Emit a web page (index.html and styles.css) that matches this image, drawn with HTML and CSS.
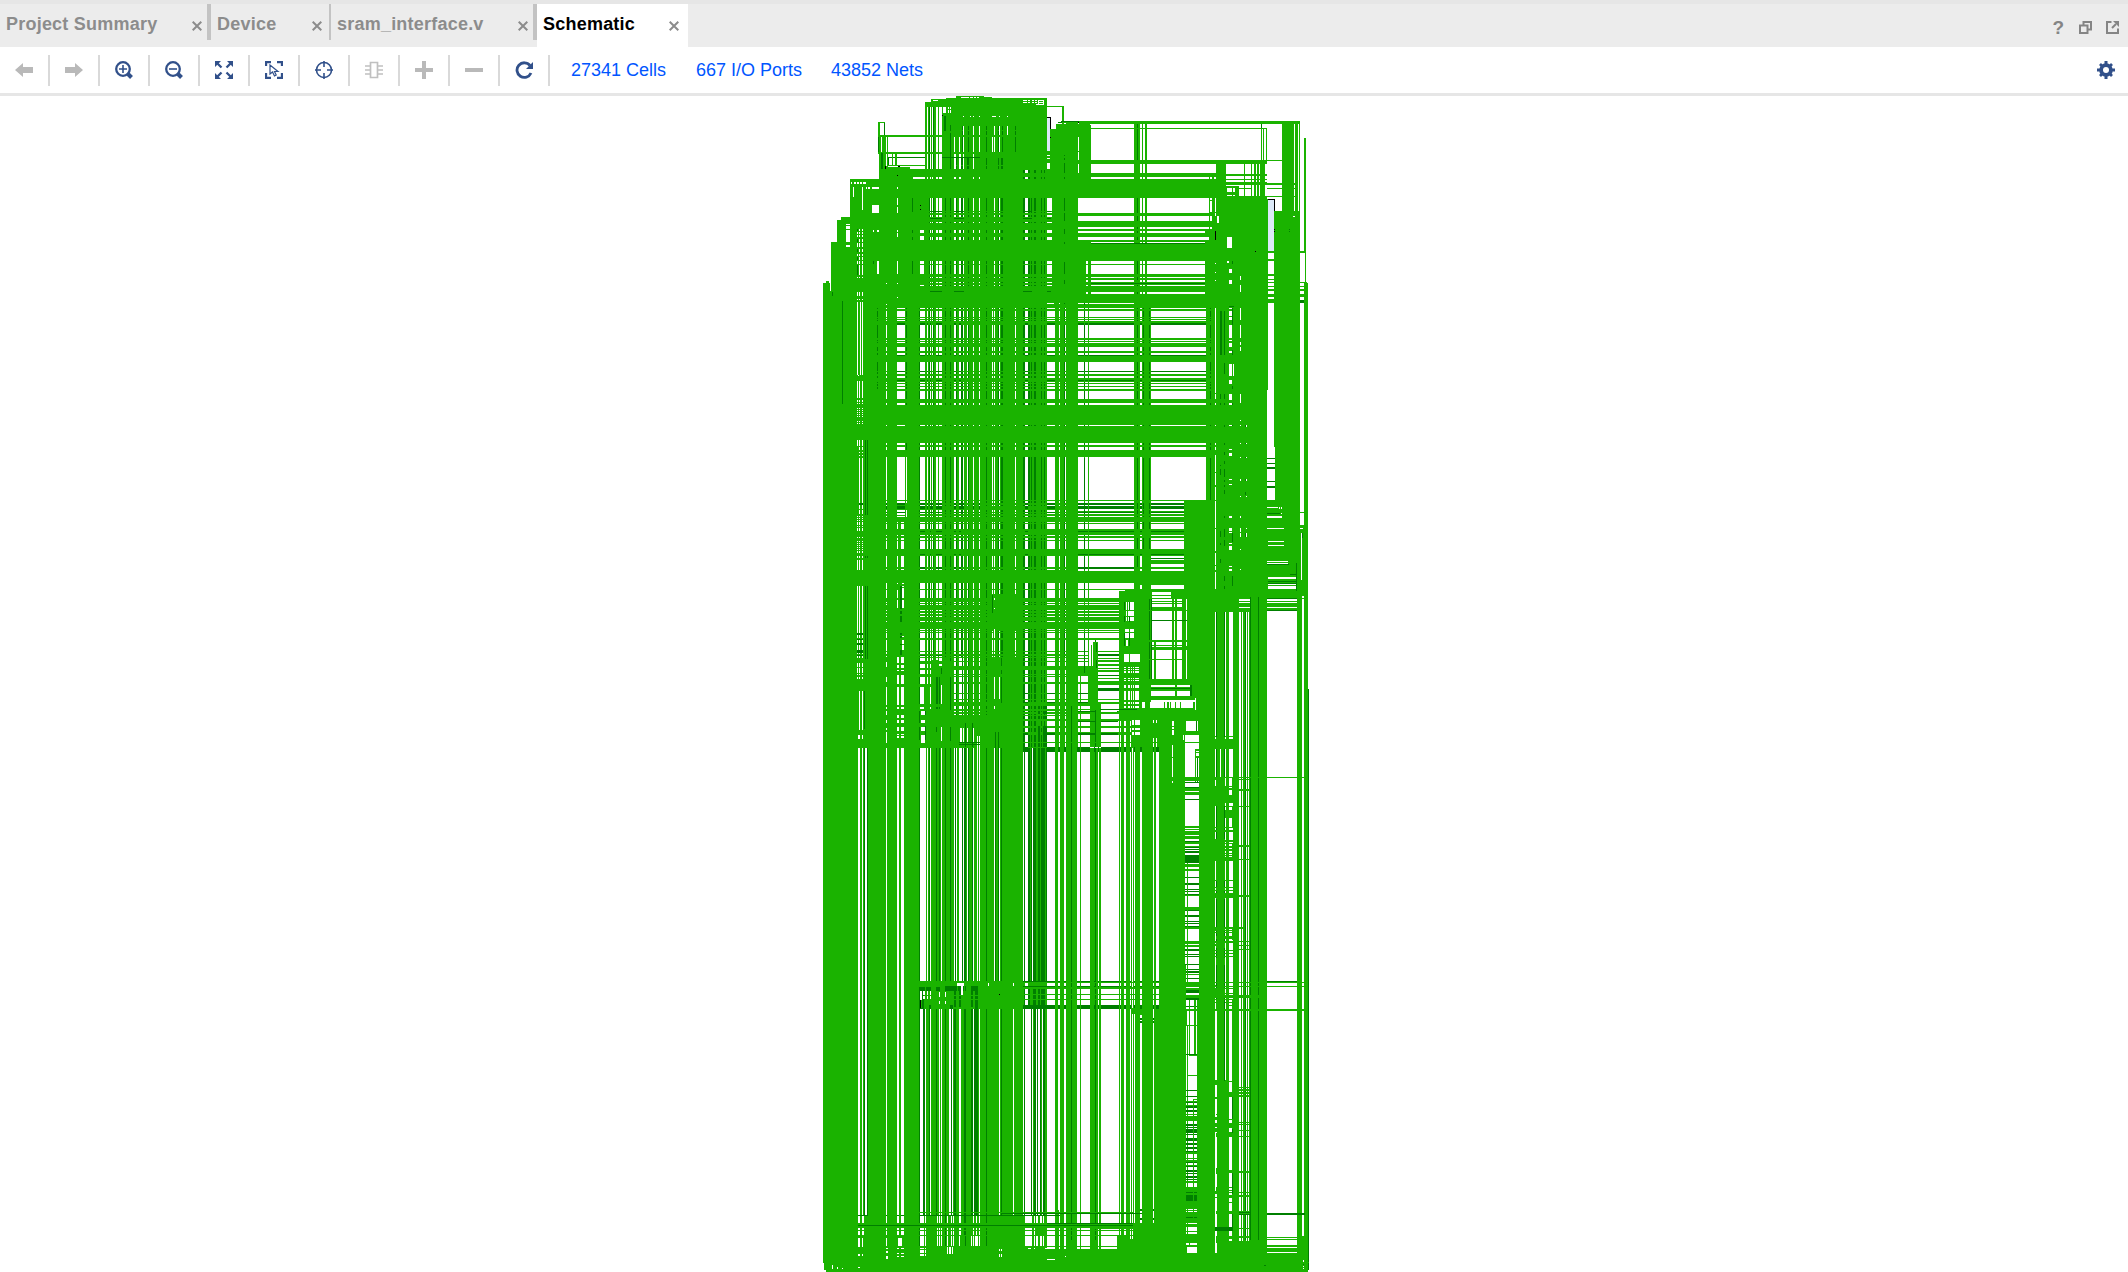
FILE: index.html
```html
<!DOCTYPE html>
<html lang="en">
<head>
<meta charset="utf-8">
<title>Schematic</title>
<link rel="stylesheet" href="styles.css">
</head>
<body>
<div class="window">
  <header class="tabbar">
    <div class="tab t1"><span>Project Summary</span><svg class="x" viewBox="0 0 10 10"><path d="M.7.7 9.3 9.3M9.3.7.7 9.3"/></svg></div>
    <div class="tab t2"><span>Device</span><svg class="x" viewBox="0 0 10 10"><path d="M.7.7 9.3 9.3M9.3.7.7 9.3"/></svg></div>
    <div class="tab t3"><span>sram_interface.v</span><svg class="x" viewBox="0 0 10 10"><path d="M.7.7 9.3 9.3M9.3.7.7 9.3"/></svg></div>
    <div class="tab t4 active"><span>Schematic</span><svg class="x" viewBox="0 0 10 10"><path d="M.7.7 9.3 9.3M9.3.7.7 9.3"/></svg></div>
    <div class="tools">
      <span class="help">?</span>
      <svg width="13" height="13" viewBox="0 0 13 13"><path d="M4.5 4V1h7.5v7.500H9M1 4.500h7.500V12H1z"/></svg>
      <svg width="13" height="13" viewBox="0 0 13 13"><path d="M5.500 1H1v11h11V7.500M6 7l4-4"/><path class="solid" d="M7 0h6v6z"/></svg>
    </div>
  </header>
  <nav class="toolbar">
    <div class="btn"><svg viewBox="0 0 18 18"><path class="off" d="M0 9l8-7v4h10v6H8v4z"/></svg></div>
    <div class="btn"><svg viewBox="0 0 18 18"><path class="off" d="M18 9l-8-7v4H0v6h10v4z"/></svg></div>
    <div class="btn"><svg viewBox="0 0 18 18"><circle class="ln2" cx="8" cy="8" r="6.800"/><path class="ln" d="M4 8h8M8 4v8"/><path class="ln4" d="M13 13l3.500 3.500"/></svg></div>
    <div class="btn"><svg viewBox="0 0 18 18"><circle class="ln2" cx="8" cy="8" r="6.800"/><path class="ln" d="M4 8h8"/><path class="ln4" d="M13 13l3.500 3.500"/></svg></div>
    <div class="btn"><svg viewBox="0 0 18 18"><path class="on" d="M0 0h6L0 6zM12 0h6v6zM0 12l6 6H0zM18 12v6h-6z"/><path class="ln2" d="M2 2l4.500 4.500M16 2l-4.500 4.500M2 16l4.500-4.500M16 16l-4.500-4.500"/></svg></div>
    <div class="btn"><svg viewBox="0 0 18 18"><path class="ln2" d="M1 5V1h5M12 1h5v4M1 12v5h5M12 17h5v-5"/><path class="ln1" d="M5 4v9l2.500-2 2 4 1.700-1-1.700-3.500H13z"/></svg></div>
    <div class="btn"><svg viewBox="0 0 18 18"><circle class="ln" cx="9" cy="9" r="7.500"/><path class="ln" d="M9 0v6M9 12v6M0 9h6M12 9h6"/></svg></div>
    <div class="btn"><svg viewBox="0 0 18 18"><path class="chip" d="M5.500 1.500h7v15h-7zM0 5h5M0 9h5M0 13h5M13 5h5M13 9h5M13 13h5"/></svg></div>
    <div class="btn"><svg viewBox="0 0 18 18"><path class="off" d="M7 0h4v7h7v4h-7v7H7v-7H0V7h7z"/></svg></div>
    <div class="btn"><svg viewBox="0 0 18 18"><path class="off" d="M0 7h18v4H0z"/></svg></div>
    <div class="btn"><svg viewBox="0 0 18 18"><path class="ln3" d="M15 4.500A7.300 7.300 0 1 0 16 12"/><path class="on" d="M18 1v7h-7z"/></svg></div>
    <a class="l1">27341 Cells</a><a class="l2">667 I/O Ports</a><a class="l3">43852 Nets</a>
    <svg class="gear" viewBox="0 0 18 18"><path class="on" d="M7.500 0h3v18h-3zM0 7.500h18v3H0z"/><path class="ln3" d="M3 3l12 12M15 3L3 15"/><circle class="on" cx="9" cy="9" r="6.800"/><circle class="hole" cx="9" cy="9" r="3"/></svg>
  </nav>
  <main class="canvas"><svg id="wires" viewBox="0 96 2128 1176" width="2128" height="1176" shape-rendering="crispEdges"></svg></main>
</div>
<script src="wires.js"></script>
</body>
</html>
```
FILE: styles.css
```css
* { box-sizing: border-box; }
body { margin: 0; background: #fff; font-family: "Liberation Sans", Arial, sans-serif; }
.window { width: 2128px; height: 1272px; display: flex; flex-direction: column; overflow: hidden; }
.tabbar { height: 47px; flex: none; display: flex; background: #ececec; border-top: 4px solid #e6e6e6; }
.tab { height: 36px; display: flex; align-items: center; justify-content: space-between; color: #8c8c8c; font-weight: bold; font-size: 18px; letter-spacing: .22px; border-right: 2px solid #c3c3c3; white-space: nowrap; }
.tab span { line-height: 36px; padding-top: 3px; }
.x { width: 10px; height: 10px; margin-top: 8px; fill: none; stroke: #8c8c8c; stroke-width: 2; }
.t1 { width: 211px; padding: 0 5px 0 6px; border-right-width: 4px; }
.t2 { width: 120px; padding: 0 7px 0 6px; }
.t3 { width: 206px; padding: 0 5px 0 6px; border-right-width: 4px; }
.t4 { width: 151px; padding: 0 9px 7px 6px; height: 43px; background: #fff; border: 0; color: #000; }
.tools { margin-left: auto; padding: 3px 9px 0 0; display: flex; align-items: center; gap: 14px; }
.tools svg { fill: none; stroke: #858585; stroke-width: 2; }
.tools .solid { fill: #858585; stroke: none; }
.help { font: bold 19px "Liberation Sans", Arial, sans-serif; color: #858585; padding-top: 1px; margin-right: 1px; }
.toolbar { height: 49px; flex: none; display: flex; align-items: center; border-bottom: 3px solid #e6e6e6; }
.btn { width: 50px; height: 31px; display: flex; align-items: center; padding-left: 15px; border-right: 2px solid #d9d9d9; }
.btn svg, .gear { width: 18px; height: 18px; flex: none; }
.on { fill: #31508a; }
.off { fill: #b9b9b9; }
.hole { fill: #fff; }
.ln, .ln1, .ln2, .ln3, .ln4 { fill: none; stroke: #31508a; stroke-width: 1.600; }
.ln1 { stroke-width: 1.200; }
.ln2 { stroke-width: 2.300; }
.ln3 { stroke-width: 2.800; }
.ln4 { stroke-width: 4; }
.chip { fill: none; stroke: #c0c0c0; stroke-width: 1.700; }
.toolbar a { color: #0055ff; font-size: 18px; white-space: nowrap; }
.l1 { margin-left: 21px; width: 125px; }
.l2 { width: 135px; }
.gear { margin: 0 13px 0 auto; }
.canvas { flex: 1; min-height: 0; }
.canvas svg { display: block; }
```
FILE: wires.js
```js
// Net drawing on a 1/3 pixel grid. Each call fills every crossing of the
// horizontal spans with the vertical spans, relative to the current origin.
const G = '#1ab300', D = '#007f00', W = '#fff', K = '#000';
const svg = document.getElementById('wires');
let ox = 0, oy = 0;
const at = (x, y) => { ox = x; oy = y; };
const spans = s => s.trim().split(/\s+/).map(p => p.split(':').map(Number));
function put(color, xs, ys) {
  let d = '';
  for (const [a, b] of spans(xs)) for (const [c, e] of spans(ys)) {
    const x0 = Math.round(ox + a / 3), x1 = Math.round(ox + b / 3);
    const y0 = Math.round(oy + c / 3), y1 = Math.round(oy + e / 3);
    d += `M${x0} ${y0}H${x1}V${y1}H${x0}z`;
  }
  const p = document.createElementNS('http://www.w3.org/2000/svg', 'path');
  p.setAttribute('fill', color);
  p.setAttribute('d', d);
  svg.appendChild(p);
}

// column sets
const gapL = '330:345 351:354 360:363 366:369 378:384 387:396 432:438 447:453 459:462 471:474 489:492 507:510 546:549 552:555 567:570 615:618 645:654 711:735 747:750 765:768';
const darkL = '357:360 369:372 405:408 420:423 438:441 453:459 474:477 528:531 564:567 573:579 639:645 654:660 663:666 672:678 693:696 702:705';
const gapR = '84:102 105:114 117:252 270:276 303:468';

// ---- upper part, left
at(810, 90);
put(G, '438:522', '18:24'); put(G, '522:546', '21:24'); put(G, '408:711', '24:36'); put(G, '363:711', '27:36');
put(G, '345:711', '36:267');
put(W, '453:477 480:489 492:498 501:507', '21:24');
put(W, '369:384', '30:33'); put(W, '639:651 654:660 666:672 675:681 687:699', '30:33 36:39');
put(W, '684:687 699:702', '30:45'); put(W, '678:700', '42:45');
put(W, '351:354 360:363 366:369 378:384 387:396', '50:135 141:186 192:237');
put(D, '357:360 369:372', '50:135 141:186 192:237');
put(W, '399:408', '51:69'); put(W, '414:417 420:423', '51:57 60:70');
put(D, '402:408', '78:123'); put(D, '420:423', '105:123 129:237');
put(W, '459:462 480:483 489:492 507:510 546:558 567:570 591:594', '78:81');
put(W, '459:462 489:492 507:510 552:555 567:570 591:594', '108:135');
put(W, '432:435 447:450 459:462 489:492 507:510 546:549 552:555 567:570', '141:186');
put(W, '432:438 447:453 459:462 489:492', '192:237');
put(D, '456:459 474:477 528:531 564:567 576:579 615:618', '108:120 123:135 141:186');
put(D, '438:441 453:459 471:477 528:531 564:567 573:579', '204:225 228:237');
put(G, '711:762', '48:51'); put(G, '708:711', '24:120'); put(G, '756:762', '48:110');
put('#dce9f8', '711:720', '84:183'); put(K, '711:723', '81:84'); put(K, '720:723', '84:117');
put(G, '738:780', '102:117'); put(G, '720:780', '117:267'); put(G, '711:720', '183:195 198:204 207:219 249:267');
put(D, '744:780', '96:99'); put(D, '753:780', '93:96'); put(K, '720:723', '141:144');
put(G, '204:210', '96:189'); put(G, '204:225', '96:99'); put(D, '222:225', '99:135'); put(D, '204:207', '138:189');
put(G, '204:404', '135:141 186:192'); put(G, '207:213 216:228 231:234', '141:189');
put(G, '207:234', '192:240'); put(D, '213:219', '189:240'); put(W, '228:231', '192:228');
put(D, '234:345', '201:204'); put(D, '234:237', '201:228'); put(G, '246:249 255:261', '192:228');
put(D, '396:510', '201:204'); put(G, '234:345', '225:228'); put(G, '228:300', '231:240'); put(K, '225:228', '228:237'); put(K, '264:270', '228:231');
put(G, '207:780', '237:267'); put(W, '309:345 351:354 360:363 366:369 378:384 387:396 432:438 447:453 489:492 507:510', '261:267');
put(D, '639:645 654:660 672:678 693:696 702:705', '240:249 261:267'); put(W, '645:654', '240:249 261:267');
// solid steps
put(G, '120:780', '267:900'); put(G, '93:120', '381:900'); put(G, '81:93', '390:900'); put(G, '63:81', '456:900'); put(G, '39:60', '579:900'); put(G, '48:57', '573:579'); put(G, '57:66', '603:900');
put(W, '123:126 132:138 141:147 150:156 159:168', '276:282'); put(W, '168:171 174:180 186:207', '291:297');
put(W, '129:132', '291:321'); put(W, '156:159', '291:360'); put(W, '186:207', '345:369'); put(W, '108:120', '402:405 408:417 420:456 465:471');
put(W, '261:264', '291:297 324:345 351:369 420:426 429:441 513:552'); put(W, '189:192 201:207', '420:426'); put(W, '201:207', '513:552');
put(D, '66:69', '606:618'); put(D, '96:99', '633:900'); put(D, '189:192', '513:522');
put(D, '306:309', '324:366 420:429 441:450 513:552');
const b1 = '324:363 366:369 375:381 396:399 420:429 441:450 513:522 525:552 561:564 576:579 585:588';
put(W, '360:363 366:369 378:384 387:396 432:438 447:453 459:462 489:492 507:510 552:555 567:570 645:654 711:726', b1);
put(W, '330:342', '420:429 438:450 513:522 525:552 585:588');
put(D, darkL, b1); put(D, '360:396 432:462 639:666 711:723', '363:366 384:387 603:606');
put(W, '141:144 147:150 156:159', '417:423 426:432 435:441 447:456 459:471 477:486 492:498 501:510 513:522 525:555 561:564 606:618 627:630');
put(D, '141:144', '417:423 447:456 477:486 501:510 525:555');
put(W, '141:144 150:153 156:159', '636:855'); put(W, '144:147', '636:858'); put(G, '144:147', '636:855'); put(W, '141:144 147:150 156:159', '873:900');
put(W, '228:231', '579:582 642:645 654:657'); put(W, '261:264', '579:582 621:624');
const b2 = '654:657 663:681 684:687 690:693 705:744 750:753 756:759 771:783 789:795 816:843 846:852 858:864 876:879 882:888 891:897';
put(W, '228:231 261:285 ' + gapL, b2); put(D, '201:204 288:291 327:330 762:765 ' + darkL, b2);
put(D, '261:285 330:345 351:354 360:363 378:396 432:438 447:453 645:654 711:735', '699:705 795:798 843:846 870:873');
put(W, '711:732 747:750', '639:642'); put(D, '762:765', '195:198 204:210 219:249 261:267 324:363 369:393 417:432 456:462 516:552 570:582 639:642');
put(K, '330:333', '345:348 357:360'); put(K, '261:264', '255:258'); put(K, '396:399', '75:78');

// ---- upper part, right
at(1050, 90);
put(G, '48:84', '99:900'); put(D, '33:87', '93:96'); put(G, '36:84', '96:99'); put(K, '84:87', '96:99');
put(G, '87:750', '93:102'); put(G, '84:123', '102:267'); put(W, '84:87', '141:183 186:249'); put(W, '120:123', '102:105');
put(G, '252:270 276:279 285:291', '102:324'); put(D, '261:264', '102:210'); put(G, '123:651', '114:117'); put(D, '633:636', '102:114'); put(G, '633:636 639:642 648:651', '117:210');
put(G, '84:651', '210:222'); put(G, '84:528', '249:261 267:324');
put(G, '651:696', '210:213'); put(G, '696:732 735:744', '93:380'); put(G, '747:750', '93:380');
put(G, '498:528', '213:330'); put(G, '582:585 603:606 612:618 621:627 630:645', '216:330');
put(G, '528:651', '252:258 267:270 276:285'); put(G, '528:567', '288:330'); put(W, '531:546 549:555', '294:306 315:318');
put(G, '477:480 486:492', '261:267'); put(G, '567:603', '294:297'); put(G, '498:651', '318:900');
put(G, '651:740', '279:285 294:297 318:321');
put(G, '651:654', '327:900'); put('#dce9f8', '654:672', '330:483'); put(K, '654:675', '327:330'); put(K, '672:675', '330:363');
put(G, '672:750', '363:900'); put(G, '762:768', '144:486'); put(G, '765:768', '486:576'); put(G, '762:774', '579:900'); put(G, '750:771', '576:579');
put(G, '651:768', '483:489'); put(G, '651:672', '507:513 552:558 567:570 576:579 588:591 597:603 612:621 627:639');
put(G, '750:762', '588:591 597:603 612:621'); put(D, '750:762', '630:639');
put(G, '477:498', '324:900'); put(W, '480:486', '324:330 333:366'); put(W, '495:498', '324:366 369:378'); put(W, '501:507', '378:399'); put(W, '480:486', '378:393 411:417'); put(K, '495:498', '423:450');
put(G, '465:498', '522:900');
put(G, '84:477', '369:900');
const c1 = '324:369 378:393 411:417 423:429 441:450 456:459 513:522 525:552 561:564 570:576 585:588 606:612';
put(W, '123:252 270:276 279:285 291:465', c1); put(W, '108:114', '513:522 525:552 561:564 570:576 585:588 606:612');
put(G, '465:477', '522:620'); put(W, '465:477', '324:330 333:369 378:393 411:417 441:450');
put(W, '84:123', '324:369 378:393 411:417 423:429 441:450'); put(G, '252:270 276:279 285:291', '324:640');
put(D, '123:465', '459:462 579:582'); put(D, '261:264', '324:369 378:393 411:417 423:429 441:450 513:552 561:570 585:588 606:612');
const c2 = '654:657 663:681 684:687 690:693 705:744 750:753 756:759 771:783 789:795 816:843 846:852 858:864 876:879 882:888 891:897';
put(W, '-9:15', c2); put(W, '27:30 45:48', c2); put(W, gapR, c2); put(D, '102:105 261:264 279:282 297:300 480:483', c2);
put(W, '84:102 105:114 117:252', '639:642'); put(D, '102:105', '639:645');
put(D, gapR, '699:705 795:798 843:846 870:873');
put(W, '495:498', '519:522 546:549 570:573 654:900'); put(W, '531:546', '441:474'); put(W, '531:537', '513:519'); put(W, '537:546', '537:549 570:582');
put(D, '546:549', '513:522 654:705 780:795 888:897'); put(D, '510:516 522:525', '663:795'); put(D, '522:525', '820:852');
put(W, '537:546', '654:657 663:678 681:690 705:744 750:753 759:771 783:789 822:858 870:882'); put(W, '570:573', '558:570 585:606 654:690 705:744 756:765 771:783');
put(W, '549:552', '822:858'); put(K, '615:618', '483:486'); put(D, '537:552', '648:651');
put(W, '654:672', '642:681 684:687 690:693 705:744 750:753 756:759 771:795 798:843 846:867 870:885 891:900');
put(K, '672:675', '417:420 423:426'); put(D, '717:720', '417:420 423:426'); put(W, '729:735', '378:381');

// ---- middle, left
at(810, 390);
put(G, '39:780', '0:1074');
put(D, '96:99', '0:42');
const m = '3:27 39:45 105:108 159:165 171:180 201:330 333:339 345:348 360:366 369:372 378:381 396:399 402:417 435:438 444:450 453:477 498:531 537:540 579:597 600:624 636:639 642:645 660:663 669:672 678:681 693:696 717:720 723:726 729:744 750:783 786:792 798:801';
const m2 = '804:813 816:828 840:852 855:858 861:876 882:909 912:927 930:936 948:957 963:966 972:975';
put(W, '228:231 ' + gapL, m); put(D, '327:330 762:765 ' + darkL, m);
put(W, '261:285', '3:27 39:45 105:108 159:165 171:180 201:330 333:339 360:366 369:375 378:381'); put(W, '288:291', '201:330 333:339 360:380'); put(D, '288:291', '3:27 39:45 159:180');
put(W, '261:264 273:282', '396:399 402:417 435:438 444:450 453:477 498:531 537:540 579:582 600:624 630:654');
put(G, '264:276', '580:795'); put(D, '270:276', '588:657 663:672 678:696 729:735 738:744 762:765 780:795'); put(W, '276:282', '588:591 594:606 609:621 630:655 738:741 750:762 765:780');
put(D, '228:231 261:285 330:345 351:354 360:369 378:396 432:438 447:462 489:492 507:510 645:654 711:735', '339:345 348:357 366:369');
put(D, '330:345 360:363 378:396 432:438 447:453 645:654', '423:426 492:495 531:537 795:798');
put(G, '546:645', '624:636'); put(G, '546:639', '612:720'); put(D, '546:549', '615:669'); put(W, '552:555', '624:630 654:657 717:744 750:783');
put(W, '141:144 147:150 156:159', '0:24 30:36 39:42 54:57 60:63 66:69 72:75 78:81 93:96 99:102 150:168');
put(W, '147:150 156:159', '171:180 186:189 195:198 204:340 345:357 360:372'); put(D, '165:168 171:174', '150:375 498:504 588:807'); put(D, '147:159', '339:345');
put(W, '141:144 147:150 156:159', '378:381 384:387 390:393 396:405 408:411 414:423 441:444 453:456 459:462 465:468 471:474 477:480 483:489 498:504 510:540 588:729 735:744 750:758 765:780 789:792 798:804 819:831 834:848 852:855 861:866');
put(D, '141:159', '729:735 747:750 759:765 780:789 795:798');
put(W, '147:150 156:159', '903:1020'); put(D, '162:165', '903:1017'); put(W, '144:150 156:159', '1035:1047');
put(W, '228:231', '816:831 861:876 891:945 951:957 963:975 990:999 1014:1020 1026:1059');
put(W, '261:267 273:282', '801:819 825:834 840:843 855:882 891:945 951:957 975:984 990:999 1011:1023 1032:1035 1038:1044');
put(W, '330:345 351:354 360:363', '804:813 822:834 840:852 861:882'); put(W, '330:342 360:363', '891:942 951:957'); put(W, '333:345', '963:975 990:999 1011:1023 1035:1059');
put(D, '327:330', '804:852 861:882 891:942 963:999 1011:1050'); put(W, '366:369 378:384', '804:810'); put(W, '387:396', '804:813 822:828');
put(D, '378:384 387:390', '861:942 951:957'); put(D, '393:396', '834:852'); put(W, '393:396', '885:942 1011:1053'); put(D, '420:423', '804:813 861:960 1011:1053'); put(D, '345:348', '963:975 1008:1050'); put(D, '378:381', '1011:1026');
put(W, '432:438 447:456 459:462 471:474 489:492 507:510', m2); put(D, '438:441 456:459 474:477 528:531', m2);
put(W, '552:555', '861:927 948:957'); put(W, '567:570', '861:927'); put(D, '573:576', '804:828 840:852 861:940');
put(W, '450:456 459:462', '1014:1056'); put(W, '471:474 489:492', '1014:1056'); put(W, '501:504 507:510', '1038:1074'); put(D, '465:468 486:489', '999:1071'); put(D, '447:510', '1056:1059 1062:1065'); put(D, '555:558 564:567', '1026:1074');
const m3 = m2 + ' 978:987 993:1008 1014:1026 1035:1056 1059:1071';
put(W, '645:654 711:735 747:750 765:768', m3); put(D, '639:645 654:660 663:666 672:678 693:696 702:705', m3);
put(D, '684:690 699:711', '948:957 963:972 978:987 1008:1071'); put(D, '639:654 711:735', '909:912 936:939 1029:1035');

// ---- middle, right
at(1050, 390);
put(G, '48:84', '0:1074'); put(D, '63:66', '948:1074');
put(G, '84:207', '330:1071'); put(G, '207:402', '330:603');
put(G, '84:651', '0:330'); put(W, gapR, '3:27 39:45 105:108 159:165 171:180 201:330');
put(D, '102:105 261:264 279:282 297:300 480:483', '3:27 39:45 105:108 159:165 171:180 204:330');
put(G, '114:117', '201:330');
put(W, '27:30', m); put(W, '495:498', '0:9 12:27 39:45 105:108 159:165 171:180 195:246 249:285 291:330');
put(G, '402:774', '330:660'); put(W, '495:498', '333:414 417:483 489:525 528:540 546:597 639:642'); put(G, '672:750', '0:660'); put(G, '762:774', '0:1110');
put(W, '537:546', '12:30 39:45 105:108 177:180 189:198 267:270 282:285 378:384 414:423 426:429 459:462 468:480 528:531 537:543');
put(W, '570:573', '12:40 90:93 105:108 159:162 201:204 267:273 318:321 378:384 414:426 429:441 477:480 537:540'); put(W, '588:591', '105:111 159:162 201:204 267:273 318:321 414:417 429:441');
put(D, '585:588', '105:111 159:162 201:204 267:273 306:315 429:441'); put(D, '522:525', '12:27 39:45 105:111 159:165 186:195 213:222 237:261 270:276 285:291 300:312 378:384 417:441 450:468 558:573 588:606'); put(D, '510:513', '12:27 39:45 225:228 237:255 423:441 459:465 507:519'); put(D, '546:549', '39:45 105:108 429:456 558:588 597:618');
put(W, '651:672', '0:9 12:33 39:57 90:93 150:156 159:165'); put(W, '651:675', '171:330'); put(D, '651:675', '204:207 219:222 231:237 273:276 288:294');
put(W, '750:762', '0:366 369:405'); put(W, '753:756', '429:570'); put(D, '756:759', '429:444');
put(W, '651:684', '351:354'); put(W, '687:690 693:696', '351:357 369:372'); put(D, '651:690', '369:372'); put(W, '651:696', '378:384'); put(W, '651:702', '414:417'); put(W, '750:759', '414:417');
put(W, '654:702', '453:456 465:468'); put(W, '651:714', '513:516 519:522'); put(D, '651:717', '522:525'); put(D, '738:741', '519:602'); put(D, '720:741', '552:555'); put(W, '654:738', '561:567 582:585 588:597'); put(D, '654:738', '573:576 579:582');
put(W, '84:102 105:114 117:252 270:276 303:402', '333:339 345:348 357:366 369:372 378:381 396:399 402:417 435:438 444:450 453:477 498:531 537:543 585:597 600:603');
put(G, '84:402', '363:366 375:378 399:402 426:435 438:444'); put(D, '84:402', '339:345 348:357 366:369 423:426 492:495'); put(G, '252:270 276:303', '333:660'); put(D, '84:252', '531:537');
put(D, '102:105', '360:366 369:372 378:381 396:417 435:438 444:477 498:540'); put(D, '261:264 279:282 297:300', '339:357 360:372 378:381 396:417 444:477'); put(D, '261:264', '498:531 597:600'); put(D, '303:402', '504:507'); put(G, '303:402', '510:522 543:579'); put(G, '114:117', '333:850');
put(G, '84:252', '543:579'); put(W, '84:114 117:207', '579:597 600:624'); put(W, '207:252', '579:597'); put(W, '303:402', '597:603'); put(G, '207:365', '603:1074'); put(G, '225:365', '598:604'); put(D, '102:105', '579:597 600:624');
put(W, '84:102 105:114 117:207', '636:639 642:645 660:663 669:672 678:681 693:696 717:720 723:726 729:744 750:783 786:795 798:804 807:813 816:828');
put(D, '102:105', '729:744 750:795 798:813 816:850'); put(G, '365:405', '597:1074'); put(G, '405:651', '597:1074');
put(W, '228:231 234:252', '636:660 663:678 681:693'); put(W, '228:234', '750:768'); put(D, '222:225 237:240', '636:660 678:696 729:768'); put(W, '225:237 240:252', '717:726 729:744');
put(W, '306:363', '606:615 618:624'); put(W, '303:366 369:375 381:396', '627:633 636:639 642:651 663:690 693:750'); put(W, '408:411', '627:660 663:750 756:768 780:866'); put(W, '306:366 369:375 381:396', '756:765 768:771 780:807 810:866'); put(D, '303:411', '690:693'); put(D, '297:300 303:306', '627:660 663:750 756:807 810:866'); put(G, '312:318', '756:866'); put(G, '366:372 375:381', '627:866');
put(W, '255:270', '768:816'); put(W, '240:255', '792:816'); put(W, '222:237', '768:816'); put(G, '207:270', '768:792');
put(W, '144:207', '750:756 759:774 777:792 798:834 837:840 846:855 858:864 867:873 885:894 903:927 930:936 942:957'); put(G, '141:207', '783:786 804:807 810:816 822:828'); put(D, '141:207', '792:798 855:858 894:903'); put(G, '129:144', '756:940'); put(D, '138:141', '759:786 810:834 852:912'); put(D, '135:138', '750:756');
put(W, '84:114', '858:876 882:909 912:927 930:936'); put(W, '117:129', '765:828'); put(G, '123:126', '765:828'); put(G, '90:93', '855:1110'); put(D, '84:114', '909:912 936:939');
put(G, '114:141', '852:940'); put(W, '222:228 234:240 243:246 249:252 255:268', '831:834 837:840 843:849 864:867 870:873 885:894 903:930 936:942 948:954');
put(W, '303:375 381:420', '885:891 903:918'); put(D, '303:420', '894:897'); put(D, '420:426', '885:918'); put(W, '276:342 345:351 357:360 363:375 378:390 393:430', '936:954'); put(G, '285:300', '930:960'); put(W, '303:438', '930:935'); put(W, '435:438', '924:960');
put(W, '84:207', '948:957 960:963 972:987 993:1008 1014:1026 1035:1056 1059:1071'); put(G, '90:93 120:153', '940:1071'); put(D, '84:135 153:204', '963:966 993:996 1029:1035'); put(D, '135:138', '960:1071'); put(W, '153:200', '960:966'); put(D, '150:262', '957:960');
put(W, '210:213 222:228 240:243', '993:1008 1014:1026 1035:1071');
put(G, '495:600', '660:666'); put(W, '495:600', '666:1074'); put(G, '498:525 528:537 549:567 573:576 579:588 591:594 597:600', '666:1074'); put(G, '495:552', '1038:1041 1047:1074'); put(W, '537:546', '1041:1047');
put(D, '498:501 522:525', '666:1040'); put(D, '585:588', '666:1074');
put(W, '567:600 603:624 627:740', '627:633 636:639 651:654'); put(D, '651:750', '624:627 660:663'); put(W, '741:762', '633:639 642:651 654:657'); put(G, '600:651', '620:1074');
put(D, '600:603 624:627', '620:1074'); put(W, '651:741', '663:1074'); put(G, '741:756', '600:1110'); put(W, '756:762', '618:624 627:660 663:1110'); put(D, '774:777', '897:1110');
put(W, '408:438 441:444', '993:1023'); put(D, '438:441', '993:1023'); put(W, '366:372', '993:1008 1011:1017 1020:1035'); put(W, '405:447', '1035:1098'); put(W, '399:402', '1035:1050'); put(W, '309:312 318:321', '990:999 1044:1074'); put(W, '246:252 255:270', '990:1005 1014:1020 1026:1035'); put(G, '437:447', '1077:1090');

// ---- lower part, left
at(810, 740);
put(G, '39:780', '24:1569');
put(W, '144:150 156:159 165:171 228:231 261:267 273:282', '24:1425'); put(D, '162:165 171:174', '24:1425');
const lo = '24:723';
put(W, '330:348 351:354 360:363 393:396 432:435 438:441 447:456 459:462 471:474 489:492 501:504 507:510 552:555 567:570 639:642 645:654 660:663 666:669 711:735 744:750 762:768', lo);
put(D, '327:330 357:360 378:381 387:390 405:408 420:423 435:438 456:459 462:468 474:477 486:489 528:531 555:558 564:567 573:576 642:645 654:660 663:666 669:678 684:690 693:705 708:711', lo);
put(G, '660:663', lo);
put(D, '639:654 711:735 744:750 762:768', '21:36');
put(G, '639:780', '6:9'); put(D, '639:780', '723:726'); put(D, '639:780', '738:741');
put(W, '645:654 711:735 744:750 762:768', '729:738 747:762 765:777 780:795'); put(D, '642:645 654:660 669:678 684:690 693:705', '747:762 765:777 780:795');
put(D, '639:735 744:750 762:768', '795:807'); put(D, '327:345 348:363 378:390', '741:753'); put(D, '405:440 444:453 456:462 465:468 483:504', '738:753');
put(W, '330:342', '753:780'); put(D, '327:330 336:342', '753:819'); put(K, '330:333', '780:804'); put(W, '339:345 351:354 360:363', '753:765 768:777'); put(D, '327:339', '804:819');
put(D, '432:438 447:453 483:489 495:504', '753:765 768:777 780:800'); put(W, '387:390 405:408', '756:770 783:792'); put(W, '453:459', '729:765'); put(W, '533:537 609:612', '729:738'); put(K, '567:570', '762:765');
put(D, '495:504', '783:807'); put(D, '357:363 420:429', '795:807'); put(W, '441:453 459:462', '729:738');
// bottom bundle
const bt = '807:1416 1419:1425';
put(W, '330:339 345:348 360:363 387:390 393:396 417:423 426:429 447:453 489:492 507:510 567:570 609:612 645:663 666:669 711:735 744:750 762:768', bt);
put(D, '327:330 339:345 357:360 378:381 405:408 423:426 432:438 462:468 483:489 492:504 528:531 573:576 642:645 663:666 672:678 681:684 690:693 699:705', bt);
put(W, '639:642 678:681 684:690 696:699', bt);
at(810, 1000);
put(G, '330:570', '636:639'); put(D, '573:780', '639:642'); put(D, '144:780', '645:648');
put(G, '174:228 231:261 267:273 282:327', '636:705'); put(W, '144:150 156:162 228:231 261:267 273:282', '648:669 684:690 693:705');
put(G, '144:780', '669:684 690:693 705:708'); put(D, '144:780', '675:678'); put(W, '144:150 156:159', '714:741'); put(W, '228:231 264:276', '714:738');
const bb = '648:669 684:690 693:705 708:738';
put(W, '330:342 345:348 381:384 387:390 393:396 411:414 423:426 429:432 447:453 489:492 498:501 507:510', bb); put(D, '327:330 405:408 462:468 528:531', bb);
put(W, '645:666 672:675 711:735 744:750 762:768', bb); put(W, '678:684 690:696 699:702', '648:669 708:738');
put(G, '351:363 450:465 468:483', '708:760'); put(W, '483:486 489:492 495:498 501:504', '708:738');
put(W, '330:342 345:348', '744:747 750:759 762:768'); put(W, '567:570 573:576', '747:753 762:771'); put(W, '654:663 672:675 705:735 744:750', '744:747'); put(W, '711:735', '777:780');
put(W, '411:414 417:423 426:429', '741:762'); put(W, '144:150 156:159', '762:768'); put(W, '228:234', '744:747 753:759 768:777'); put(W, '261:267 273:282', '744:747 759:762 768:771');
put(G, '39:780', '780:789'); put(G, '42:780', '789:810'); put(G, '48:780', '810:816'); put(W, '66:69', '795:807'); put(W, '81:84', '801:807'); put(W, '96:99', '804:807'); put(W, '144:150', '801:804');

// ---- lower part, right
at(1050, 740);
put(W, '-9:900', '24:1539');
const rails = '15:27 30:42 48:81 90:93 120:144 147:153 207:210 213:222 228:240 243:246 249:252 255:270 276:309 312:318 327:405 447:495 498:525 528:537 549:567 573:576 579:588 591:594 597:651 741:756 762:777';
put(G, rails, '24:1539'); put(W, '24:27', '24:1410');
put(D, '63:66 135:138 585:588 600:603 624:627', '24:1500'); put(D, '498:501 522:525', '24:780'); put(D, '774:777', '0:1590');
const bet = '-9:15 24:30 42:48 81:90 93:120 132:135 144:147 153:207 210:213 222:228 240:243 252:255 270:276 309:312 318:327';
put(D, bet, '21:36 723:726 738:741 795:807'); put(G, '-9:447', '6:9'); put(G, '-9:327', '726:729 741:747 762:765 777:780');
put(W, '366:369', '15:50 54:111 123:129'); put(G, '366:369', '51:54'); put(G, '435:447', '27:33 36:39 48:54'); put(G, '435:438', '27:126'); put(D, '441:444', '54:126');
put(G, '405:765', '111:114'); put(G, '405:447', '114:123 144:153 156:165 258:264 267:270 273:285 288:297 303:312 318:321 372:381 387:393 465:468 501:510 561:567 603:612 615:621 702:705 729:741 744:756');
put(D, '405:447', '126:129 141:144 177:180 303:306 321:324 327:330 333:339 345:369 411:414 429:435 447:450 453:456 462:465 510:513 525:531 543:546 549:552 558:561 627:633 642:645 648:651 672:675 687:690 693:699 714:717 750:759 774:780 798:801');
put(G, '411:414', '369:741'); put(G, '405:408', '675:1539');
put(G, '495:549', '24:27 138:189 198:201 210:234 261:264 270:276 300:306 309:312 318:324 327:333 339:342 345:348 351:363 420:423 441:444 450:453 459:474 561:567 570:573 576:579 588:597 603:609 630:633 639:642 648:651 744:747 759:762 768:771 777:780 786:789');
put(G, '495:525', '114:250 297:438 444:450 474:570 610:625 655:740 747:775'); put(D, '498:501', '198:258 423:438 477:560 675:740'); put(D, '522:525', '198:258 423:438 477:560 675:740');
put(W, '495:498', '120:138 198:258 267:270 276:285 291:297 363:420 423:438 444:450 474:561 573:576 588:603 609:612 618:627 654:735');
put(W, '537:546', '129:132 135:138 141:144 150:165'); put(W, '510:513', '27:111'); put(G, '546:549', '114:144 201:261 309:354 564:600');
put(G, '567:600', '117:120 147:153 198:201 315:321 357:360 465:471 603:606 615:618 627:630'); put(G, '567:582', '561:567');
put(G, '651:765', '726:729 738:741 807:813'); put(D, '651:741', '723:726'); put(G, '405:651', '726:729 738:741 765:774 807:813');
put(G, '243:270', '804:822');
at(1050, 1000);
put(G, '312:411', '27:800'); put(G, '270:276', '27:46'); put(W, '270:276', '46:627 633:654 660:666'); put(D, '270:276 309:312', '54:60 63:69 627:633 654:660');
put(G, '441:495', '0:800'); put(W, '408:441', '78:740'); put(G, '411:414', '78:740'); put(G, '417:420', '0:165'); put(G, '432:438', '0:165'); put(D, '408:441', '162:165'); put(G, '417:441', '165:168'); put(G, '408:441', '75:78');
put(G, '414:441', '225:228'); put(D, '408:441', '270:273 288:291 306:309 318:324 330:336 372:378 381:384 387:399 402:405 414:423 429:435 441:447 453:456 486:489 498:501 510:516 519:522 528:534 537:540 576:579 585:603 651:654');
put(G, '408:441', '303:306 315:318 342:345 348:363 456:462 474:477 480:486 495:498 543:549 561:576 579:585 603:627 630:633 636:651 654:669 672:681 693:696 702:729 735:741'); put(G, '429:432', '297:670'); put(G, '429:441', '297:300');
put(G, '495:537', '240:255 291:342 351:360 369:381 384:396 411:504 522:561 573:582 591:594 609:633 642:681 684:708');
put(G, '501:537', '243:800'); put(D, '522:525', '0:243');
put(W, '495:501', '33:240 255:291'); put(G, '495:501', '291:342'); put(W, '495:501', '297:342 345:351 360:369 381:384 396:399 411:504 522:561 582:591 594:609 609:633 642:681 690:708 729:759');
put(G, '546:567', '0:800'); put(G, '537:546', '6:9 15:18 27:33 243:246 276:291 357:360 369:384 396:411 510:519 561:564 570:573 576:579 585:594 606:609 633:642 708:717 723:740 750:753'); put(D, '546:549', '291:357 388:400 519:582 642:690'); put(D, '495:549', '681:693');
put(G, '567:600', '261:264 267:273 276:282 285:291 366:369 372:375 390:393 408:411 513:519 576:579 585:591 633:645 684:687 708:714'); put(G, '495:765', '27:33');
put(D, '567:603', '636:639 642:645'); put(D, '651:765', '639:645');
put(G, '-9:250', '636:639 669:684 690:693 705:708'); put(D, '-9:276', '639:642 669:672 675:678'); put(D, '-9:30', '645:648'); put(G, '132:408', '678:687'); put(G, '201:228', '705:770'); put(G, '228:408', '717:800'); put(G, '250:312', '669:800');
put(G, '-9:207', '738:741 747:777'); put(G, '651:762', '711:714 717:720 735:741 744:756'); put(G, '756:777', '708:790'); put(D, '774:777', '0:786');
put(G, '537:651', '723:800'); put(G, '15:765', '759:780'); put(G, '-9:756', '780:816'); put(G, '756:774', '780:816'); put(W, '759:762', '780:786 798:801 804:807'); put(D, '759:762', '792:795'); put(D, '642:648', '795:798');
put(W, '408:441', '729:735'); put(W, '495:501', '729:759'); put(G, '417:420', '720:740'); put(W, '45:48', '768:771');
```
